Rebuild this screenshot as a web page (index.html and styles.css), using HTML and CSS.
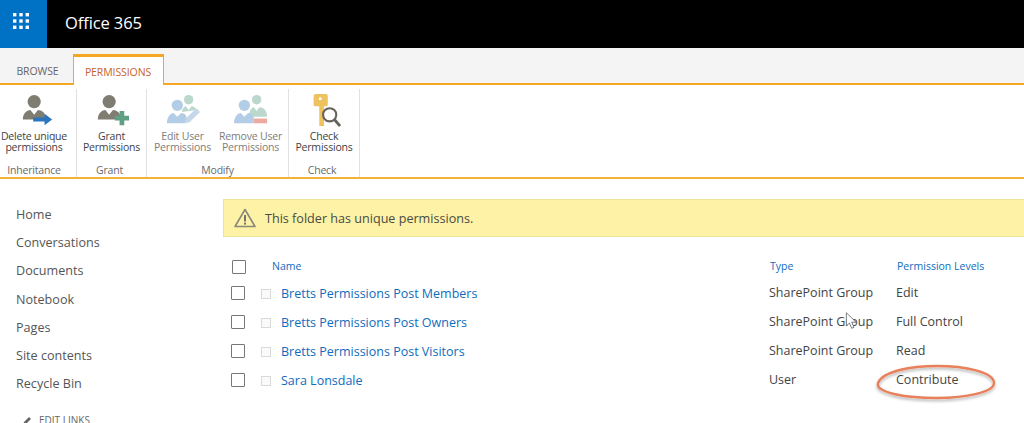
FILE: index.html
```
<!DOCTYPE html>
<html lang="en">
<head>
<meta charset="utf-8">
<title>Permissions</title>
<link rel="stylesheet" href="styles.css">
</head>
<body>
<header class="topbar">
  <div class="launcher">
    <svg width="16" height="16" viewBox="0 0 16 16" fill="#fff"><rect x="0" y="0" width="3.4" height="3.4"/><rect x="6.3" y="0" width="3.4" height="3.4"/><rect x="12.6" y="0" width="3.4" height="3.4"/><rect x="0" y="6.3" width="3.4" height="3.4"/><rect x="6.3" y="6.3" width="3.4" height="3.4"/><rect x="12.6" y="6.3" width="3.4" height="3.4"/><rect x="0" y="12.6" width="3.4" height="3.4"/><rect x="6.3" y="12.6" width="3.4" height="3.4"/><rect x="12.6" y="12.6" width="3.4" height="3.4"/></svg>
  </div>
  <div class="brand">Office 365</div>
</header>
<nav class="tabs">
  <div class="tab">BROWSE</div>
  <div class="tab tab-active">PERMISSIONS</div>
</nav>
<section class="ribbon">
  <div class="group group-inherit">
    <div class="cmds">
      <div class="cmd">
        <svg class="ico" width="34" height="34" viewBox="0 0 36 36"><circle cx="15" cy="8" r="7" fill="#7f7c72"/><path d="M3 27c0-7 5-10 8-10l4 5 4-5c4 0 8 3 8 8v2z" fill="#7f7c72"/><path d="M14 25h12v-4l8 6-8 6v-4H14z" fill="#2a75bd"/></svg>
        <span>Delete unique<br>permissions</span>
      </div>
    </div>
    <div class="glabel">Inheritance</div>
  </div>
  <div class="group group-grant">
    <div class="cmds">
      <div class="cmd">
        <svg class="ico" width="34" height="34" viewBox="0 0 36 36"><circle cx="15" cy="8" r="7" fill="#7f7c72"/><path d="M3 27c0-7 5-10 8-10l4 5 4-5c4 0 8 3 8 8v2z" fill="#7f7c72"/><path d="M21 23h5v-5h5v5h5v5h-5v5h-5v-5h-5z" fill="#5f9f83"/></svg>
        <span>Grant<br>Permissions</span>
      </div>
    </div>
    <div class="glabel">Grant</div>
  </div>
  <div class="group group-modify">
    <div class="cmds cmds-dim">
      <div class="cmd">
        <svg class="ico" width="34" height="34" viewBox="0 0 36 36"><circle cx="24" cy="6" r="5" fill="#bcd8cc"/><path d="M17 19c0-4 3-6 4-6l3 4 3-4c2 0 5 2 5 4z" fill="#bcd8cc"/><circle cx="12" cy="12" r="6" fill="#b4cde6"/><path d="M1 31c0-7 4-11 7-11l4 4 4-4c4 0 6 3 6 6l-2 5z" fill="#b4cde6"/><path d="M20 31l1-5 11-11 4 4-11 11z" fill="#c5d8ea"/></svg>
        <span>Edit User<br>Permissions</span>
      </div>
      <div class="cmd">
        <svg class="ico" width="34" height="34" viewBox="0 0 36 36"><circle cx="24" cy="6" r="5" fill="#bcd8cc"/><path d="M16 24c0-7 3-10 5-10l3 4 3-4c4 0 8 3 8 10z" fill="#bcd8cc"/><circle cx="11" cy="12" r="6" fill="#b4cde6"/><path d="M0 31c0-7 4-11 7-11l4 4 4-4c4 0 6 3 6 6v5z" fill="#b4cde6"/><rect x="21" y="26" width="14" height="5" fill="#eda9a0"/></svg>
        <span>Remove User<br>Permissions</span>
      </div>
    </div>
    <div class="glabel">Modify</div>
  </div>
  <div class="group group-check">
    <div class="cmds">
      <div class="cmd">
        <svg class="ico" width="34" height="34" viewBox="0 0 36 36"><path d="M9 0h11a2 2 0 0 1 2 2v9a2 2 0 0 1-2 2h-2v21h-5V13h-4a2 2 0 0 1-2-2V2a2 2 0 0 1 2-2z" fill="#eec35f"/><circle cx="14" cy="5" r="1.6" fill="#fff"/><circle cx="24" cy="22" r="7" fill="#fff" fill-opacity=".6" stroke="#66635c" stroke-width="2.2"/><path d="M29 27l6 7" stroke="#66635c" stroke-width="3"/></svg>
        <span>Check<br>Permissions</span>
      </div>
    </div>
    <div class="glabel">Check</div>
  </div>
</section>
<div class="page">
  <aside class="sidenav">
    <a>Home</a>
    <a>Conversations</a>
    <a>Documents</a>
    <a>Notebook</a>
    <a>Pages</a>
    <a>Site contents</a>
    <a>Recycle Bin</a>
    <div class="editlinks">
      <svg width="11" height="11" viewBox="0 0 11 11"><path d="M1 10l1-3 5-5 2 2-5 5z" fill="#666"/></svg>
      <span>EDIT LINKS</span>
    </div>
  </aside>
  <main class="content">
    <div class="banner">
      <svg width="22" height="20" viewBox="0 0 22 20"><path d="M11 1.5L21 18.5H1z" fill="none" stroke="#8b887a" stroke-width="1.6" stroke-linejoin="round"/><rect x="10" y="7" width="2" height="6.5" fill="#77746a"/><rect x="10" y="14.6" width="2" height="2" fill="#77746a"/></svg>
      <span>This folder has unique permissions.</span>
    </div>
    <div class="table">
      <div class="row row-head">
        <span class="check"></span>
        <span class="hname">Name</span>
        <span class="htype">Type</span>
        <span class="hlevel">Permission Levels</span>
      </div>
      <div class="row">
        <span class="check"></span><span class="mini"></span>
        <a class="name">Bretts Permissions Post Members</a>
        <span class="type">SharePoint Group</span><span class="level">Edit</span>
      </div>
      <div class="row">
        <span class="check"></span><span class="mini"></span>
        <a class="name">Bretts Permissions Post Owners</a>
        <span class="type">SharePoint Group</span><span class="level">Full Control</span>
      </div>
      <div class="row">
        <span class="check"></span><span class="mini"></span>
        <a class="name">Bretts Permissions Post Visitors</a>
        <span class="type">SharePoint Group</span><span class="level">Read</span>
      </div>
      <div class="row">
        <span class="check"></span><span class="mini"></span>
        <a class="name">Sara Lonsdale</a>
        <span class="type">User</span><span class="level">Contribute</span>
      </div>
    </div>
  </main>
</div>
<svg class="cursor" width="14" height="21" viewBox="0 0 16 22"><path d="M1.5 1v15l3.6-3.2 2.6 6 2.6-1.1-2.6-5.9h4.9z" fill="#fff" stroke="#6d6d6d" stroke-width="1"/></svg>
<svg class="circle" width="128" height="44" viewBox="0 0 128 44"><defs><filter id="sh" x="-10%" y="-20%" width="120%" height="150%"><feDropShadow dx="0" dy="2" stdDeviation="1.5" flood-color="#000" flood-opacity=".3"/></filter></defs><path d="M7 21C12 9 40 4 66 4c28 0 57 6 57 17 0 9-28 15-57 15-30 0-62-5-59-15z" fill="none" stroke="#e8805c" stroke-width="2.4" filter="url(#sh)"/></svg>
</body>
</html>
```
FILE: styles.css
```
* { box-sizing: border-box; }
html, body { margin: 0; height: 423px; overflow: hidden; }
body { position: relative; background: #fff; color: #444; font-family: "Open Sans", "Liberation Sans", sans-serif; }

.topbar { display: flex; height: 48px; background: #000; }
.launcher { width: 47px; padding: 13px 0 0 13px; background: #0072c6; }
.launcher svg { display: block; }
.brand { margin-left: 18px; color: #fff; font-size: 16.5px; line-height: 46px; letter-spacing: -.1px; }

.tabs { display: flex; height: 37px; padding-top: 6px; background: #f4f4f4; border-bottom: 2px solid #f5a623; }
.tab { width: 73px; padding: 10px 0 0 2px; text-align: center; font-size: 10.5px; letter-spacing: -.1px; color: #666; }
.tab-active { width: 91px; height: 31px; background: #fff; color: #c8622a; border: 1px solid #f5a623; border-top-width: 3px; border-bottom: 0; padding: 8px 1px 0 0; }

.ribbon { display: flex; height: 94px; padding-top: 4px; border-bottom: 2px solid #f5b335; font-size: 10.5px; letter-spacing: -.2px; line-height: 11px; color: #3f3f3f; }
.group { display: flex; flex-direction: column; align-items: center; border-right: 1px solid #e1e1e1; }
.group-inherit { width: 77px; padding-right: 8px; }
.group-inherit .ico { margin-left: 6px; }
.group-grant { width: 70px; }
.group-grant .glabel { margin-right: 4px; }
.group-modify { width: 142px; }
.group-modify .cmds { padding-left: 1px; }
.group-check { width: 71px; }
.group-check .glabel { margin-right: 4px; }
.cmds { flex: 1; display: flex; justify-content: center; }
.cmds-dim { gap: 8px; color: #7d7d7d; }
.cmd { display: flex; flex-direction: column; align-items: center; text-align: center; white-space: nowrap; }
.ico { margin: 5px 0 3px; }
.glabel { height: 14px; color: #6a6a6a; font-size: 10.5px; line-height: 14px; }

.page { display: flex; padding-top: 20px; }
.sidenav { width: 223px; flex: none; padding: 6px 0 0 16px; display: flex; flex-direction: column; font-size: 12.6px; color: #555; }
.sidenav a { flex: none; height: 28.2px; line-height: 20px; }
.editlinks { flex: none; display: flex; align-items: center; gap: 6px; margin: 11px 0 0 6px; font-size: 10px; color: #666; }

.content { flex: 1; min-width: 0; }
.banner { display: flex; align-items: center; gap: 9px; height: 38px; padding-left: 10px; background: #fdf2a5; border: 1px solid #ece39a; border-right: 0; font-size: 12.6px; color: #4a4a44; }

.table { margin-top: 15px; }
.row { display: grid; grid-template-columns: 30px 20px 488px 127px 1fr; align-items: center; height: 29.1px; padding-left: 8px; font-size: 12.5px; }
.row-head { grid-template-columns: 41px 498px 127px 1fr; height: 27px; font-size: 10.5px; color: #0f6cbd; }
.check { width: 14px; height: 14px; border: 1px solid #777; border-radius: 1px; background: #fff; }
.row .check { margin-bottom: 1px; }
.row-head .check { margin: 2px 0 0 1px; }
.mini { width: 10px; height: 10px; border: 1px solid #d9d9d9; background: #fafafa; }
.name { color: #0f6cbd; }
.type, .level { color: #444; margin-bottom: 2px; }

.cursor { position: absolute; left: 845px; top: 311px; }
.circle { position: absolute; left: 871px; top: 362px; }
```
